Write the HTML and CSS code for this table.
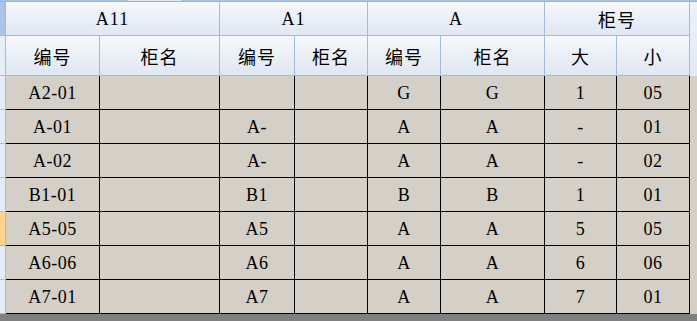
FILE: index.html
```html
<!DOCTYPE html>
<html lang="zh">
<head>
<meta charset="utf-8">
<title>柜号表</title>
<link rel="stylesheet" href="styles.css">
</head>
<body>
<div class="topband">
  <div class="tb-a"></div>
  <div class="tb-b"></div>
  <div class="tb-c"></div>
</div>
<div class="grid">
  <div class="rh rh-dark"></div>
  <div class="hc span2">A11</div>
  <div class="hc span2">A1</div>
  <div class="hc span2">A</div>
  <div class="hc span2 zh">柜号</div>
  <div class="hfill"></div>

  <div class="rh rh-light"></div>
  <div class="hc zh">编号</div>
  <div class="hc zh">柜名</div>
  <div class="hc zh">编号</div>
  <div class="hc zh">柜名</div>
  <div class="hc zh">编号</div>
  <div class="hc zh">柜名</div>
  <div class="hc zh">大</div>
  <div class="hc zh">小</div>

  <div class="rh"></div><div class="dc">A2-01</div><div class="dc"></div><div class="dc"></div><div class="dc"></div><div class="dc">G</div><div class="dc">G</div><div class="dc">1</div><div class="dc">05</div><div class="dfill"></div>
  <div class="rh"></div><div class="dc">A-01</div><div class="dc"></div><div class="dc">A-</div><div class="dc"></div><div class="dc">A</div><div class="dc">A</div><div class="dc">-</div><div class="dc">01</div><div class="dfill"></div>
  <div class="rh"></div><div class="dc">A-02</div><div class="dc"></div><div class="dc">A-</div><div class="dc"></div><div class="dc">A</div><div class="dc">A</div><div class="dc">-</div><div class="dc">02</div><div class="dfill"></div>
  <div class="rh"></div><div class="dc">B1-01</div><div class="dc"></div><div class="dc">B1</div><div class="dc"></div><div class="dc">B</div><div class="dc">B</div><div class="dc">1</div><div class="dc">01</div><div class="dfill"></div>
  <div class="rh rh-sel"></div><div class="dc">A5-05</div><div class="dc"></div><div class="dc">A5</div><div class="dc"></div><div class="dc">A</div><div class="dc">A</div><div class="dc">5</div><div class="dc">05</div><div class="dfill"></div>
  <div class="rh"></div><div class="dc">A6-06</div><div class="dc"></div><div class="dc">A6</div><div class="dc"></div><div class="dc">A</div><div class="dc">A</div><div class="dc">6</div><div class="dc">06</div><div class="dfill"></div>
  <div class="rh"></div><div class="dc">A7-01</div><div class="dc"></div><div class="dc">A7</div><div class="dc"></div><div class="dc">A</div><div class="dc">A</div><div class="dc">7</div><div class="dc">01</div><div class="dfill"></div>
</div>
<div class="bottombar"></div>
</body>
</html>
```
FILE: styles.css
```css
html, body {
  margin: 0;
  padding: 0;
  width: 697px;
  height: 321px;
  overflow: hidden;
  background: #d4d0c8;
  font-family: "Liberation Serif", "Noto Sans CJK SC", serif;
  font-size: 18px;
  color: #000;
}

.topband {
  display: flex;
  height: 2px;
}
.tb-a {
  width: 128px;
  background: #a9c3e5;
  border-bottom: 1px solid #9bb4d2;
  box-sizing: border-box;
}
.tb-b {
  width: 53px;
  background: #dde6f2;
  border-bottom: 1px solid #9bb4d2;
  box-sizing: border-box;
}
.tb-c {
  flex: 1;
  background: #a9c3e5;
  border-bottom: 1px solid #9bb4d2;
  box-sizing: border-box;
}

.grid {
  display: grid;
  grid-template-columns: 6px 94px 120px 75px 73px 73px 104px 72px 73px 1fr;
  grid-template-rows: 34px 40px repeat(7, 34px);
}

.grid > div {
  box-sizing: border-box;
  display: flex;
  align-items: center;
  justify-content: center;
  white-space: nowrap;
}

.rh {
  background: #e4ecf7;
  border-right: 1px solid #a3bbd7;
  border-bottom: 1px solid #a9bed6;
}
.rh-dark {
  background: #aac4e6;
}
.rh-light {
  background: #e6eef9;
}
.rh-sel {
  background: #ffd58d;
  border-bottom-color: #e9a84a;
}

.hc {
  background: linear-gradient(#f6f8fb, #dfe7f3);
  border-right: 1px solid #a3bbd7;
  border-bottom: 1px solid #a3bbd7;
  padding-top: 1px;
  letter-spacing: 1px;
}
.span2 {
  grid-column: span 2;
}
.zh {
  font-family: "Noto Sans CJK SC", sans-serif;
  font-size: 18px;
  letter-spacing: 1px;
}

.hfill {
  grid-row: span 2;
  background: linear-gradient(#eef2f9, #e1e9f5);
}

.dc {
  background: #d4d0c8;
  border-right: 1px solid #000;
  border-bottom: 1px solid #000;
  padding-top: 1px;
  letter-spacing: 0.5px;
}
.dfill {
  background: #d4d0c8;
}

.bottombar {
  height: 7px;
  background: #808080;
}
```
